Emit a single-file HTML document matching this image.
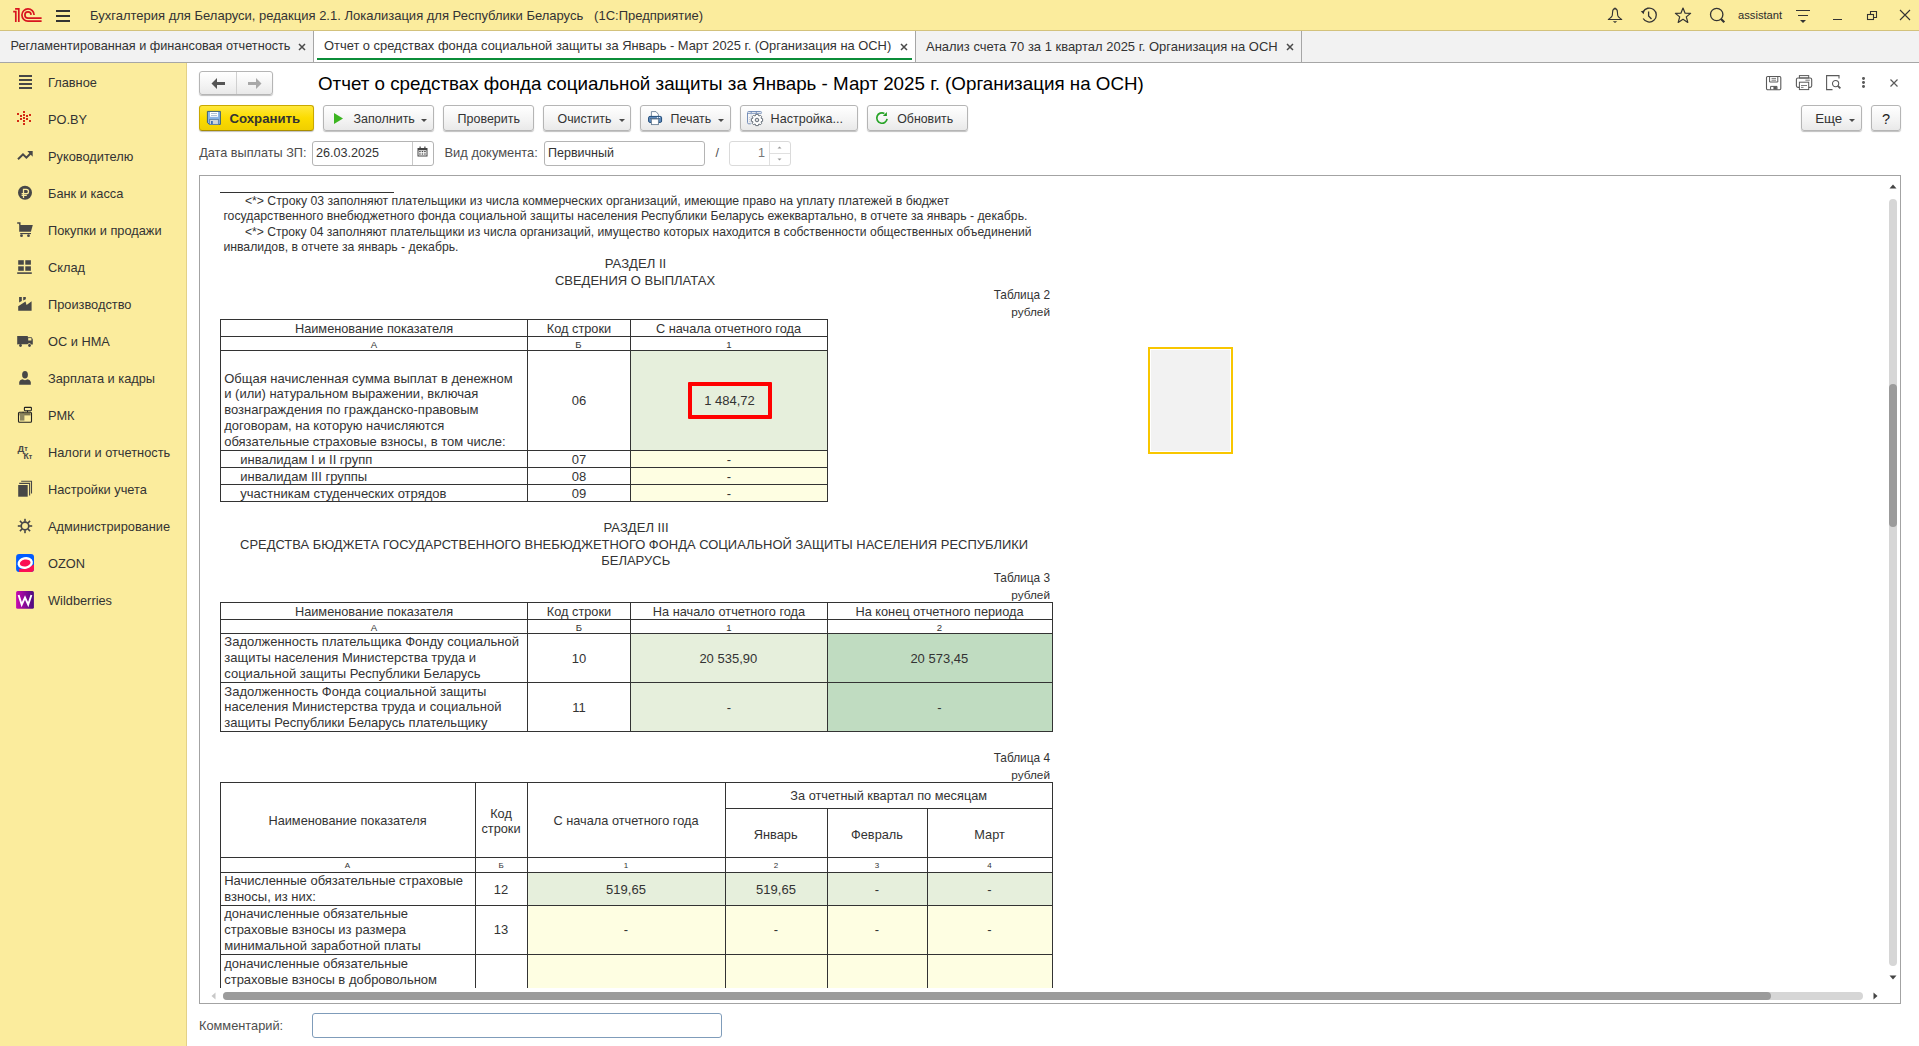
<!DOCTYPE html><html><head><meta charset="utf-8"><style>
html,body{margin:0;padding:0;width:1919px;height:1046px;overflow:hidden;background:#fff;}
body{position:relative;font-family:"Liberation Sans",sans-serif;}
.t{position:absolute;white-space:pre;line-height:1;}
.r{position:absolute;}
.btn{position:absolute;box-sizing:border-box;border:1px solid #b5b5b5;border-radius:3px;background:linear-gradient(#ffffff,#f3f3f3 60%,#e9e9e9);box-shadow:0 1px 1px rgba(0,0,0,0.25);}
svg{position:absolute;overflow:visible;}
</style></head><body>
<div class="r" style="left:0px;top:0px;width:1919px;height:30px;background:#fbec9d;"></div>
<div class="r" style="left:0px;top:30px;width:1919px;height:1px;background:#d3c27c;"></div>
<svg style="left:0px;top:0px" width="50" height="30" viewBox="0 0 50 30">
<g fill="none" stroke="#d8141f" stroke-width="1.7" stroke-linecap="butt">
<path d="M13.2 11.6 H15.8 V21.9"/>
<path d="M15.1 8.85 H18.8 V21.9"/>
<path d="M34.1 14.9 A6.1 6.1 0 1 0 28 21.1 H41.6"/>
<path d="M31.1 14.9 A3.1 3.1 0 1 0 28 18.1 H41.6"/>
</g></svg>
<div class="r" style="left:56px;top:10px;width:14px;height:1.5px;background:#333;"></div>
<div class="r" style="left:56px;top:15px;width:14px;height:1.5px;background:#333;"></div>
<div class="r" style="left:56px;top:20px;width:14px;height:1.5px;background:#333;"></div>
<div class="t" style="top:9px;font-size:13px;color:#333;left:90px;">Бухгалтерия для Беларуси, редакция 2.1. Локализация для Республики Беларусь   (1С:Предприятие)</div>
<svg style="left:1606px;top:7px" width="18" height="17" viewBox="0 0 18 17">
<path d="M9 1.6 C7.2 1.8 6.6 3.2 6.6 5 L6.3 8.4 C6 10.4 3.6 11.4 2.3 12.5 H15.7 C14.4 11.4 12 10.4 11.7 8.4 L11.4 5 C11.4 3.2 10.8 1.8 9 1.6 Z" fill="none" stroke="#333" stroke-width="1.1" stroke-linejoin="round"/>
<circle cx="9" cy="1.2" r="0.8" fill="#333"/>
<path d="M6.8 14.2 H11.2 L9 16 Z" fill="#333"/>
</svg>
<svg style="left:1640px;top:7px" width="18" height="17" viewBox="0 0 18 17">
<path d="M3.2 11.5 A7 7 0 1 0 3 5" fill="none" stroke="#333" stroke-width="1.3"/>
<path d="M0.8 4.2 L4.6 3.4 L3.6 7.2 Z" fill="#333"/>
<path d="M8.6 4.5 L8.6 9 L11.5 12" fill="none" stroke="#333" stroke-width="1.3"/>
</svg>
<svg style="left:1674px;top:7px" width="18" height="17" viewBox="0 0 18 17">
<path d="M9 1 L11.1 6.2 L16.6 6.4 L12.3 9.9 L13.8 15.4 L9 12.3 L4.2 15.4 L5.7 9.9 L1.4 6.4 L6.9 6.2 Z" fill="none" stroke="#333" stroke-width="1.2" stroke-linejoin="round"/>
</svg>
<svg style="left:1709px;top:7px" width="18" height="17" viewBox="0 0 18 17">
<circle cx="7.7" cy="7.5" r="6.2" fill="none" stroke="#333" stroke-width="1.3"/>
<path d="M12 12 L15.3 15.3" stroke="#333" stroke-width="2.2"/>
</svg>
<div class="t" style="top:10px;font-size:11.2px;color:#2a2a2a;left:1738px;">assistant</div>
<svg style="left:1795px;top:9px" width="16" height="15" viewBox="0 0 16 15">
<path d="M1 1.5 H15 M3 6.5 H13" stroke="#333" stroke-width="1"/>
<path d="M5 11 H11 L8 14 Z" fill="#333"/>
</svg>
<div class="r" style="left:1833px;top:18.5px;width:9px;height:1.5px;background:#333;"></div>
<svg style="left:1866px;top:10px" width="12" height="12" viewBox="0 0 12 12">
<rect x="1.5" y="4.5" width="6" height="5" fill="none" stroke="#333" stroke-width="1.1"/>
<path d="M4.5 4.5 V1.5 H10.5 V7.5 H7.5" fill="none" stroke="#333" stroke-width="1.1"/>
</svg>
<svg style="left:1899px;top:9px" width="12" height="12" viewBox="0 0 12 12">
<path d="M1 1 L11 11 M11 1 L1 11" stroke="#333" stroke-width="1.1"/>
</svg>
<div class="r" style="left:0px;top:31px;width:1919px;height:31px;background:#f2f2f2;"></div>
<div class="r" style="left:0px;top:62px;width:1919px;height:1px;background:#a6a6a6;"></div>
<div class="r" style="left:314px;top:31px;width:601px;height:31px;background:#ffffff;"></div>
<div class="r" style="left:313px;top:31px;width:1px;height:31px;background:#a6a6a6;"></div>
<div class="r" style="left:915px;top:31px;width:1px;height:31px;background:#a6a6a6;"></div>
<div class="r" style="left:1301px;top:31px;width:1px;height:31px;background:#a6a6a6;"></div>
<div class="r" style="left:317px;top:58px;width:595px;height:2px;background:#0b8d39;"></div>
<div class="t" style="top:40px;font-size:12.7px;color:#333;left:10.5px;">Регламентированная и финансовая отчетность</div>
<div class="t" style="top:40px;font-size:12.9px;color:#333;left:324px;">Отчет о средствах фонда социальной защиты за Январь - Март 2025 г. (Организация на ОСН)</div>
<div class="t" style="top:40px;font-size:12.98px;color:#333;left:926px;">Анализ счета 70 за 1 квартал 2025 г. Организация на ОСН</div>
<svg style="left:297.5px;top:42.5px" width="8" height="8" viewBox="0 0 8 8"><path d="M1 1 L7 7 M7 1 L1 7" stroke="#4a4a4a" stroke-width="1.5"/></svg>
<svg style="left:899.5px;top:42.5px" width="8" height="8" viewBox="0 0 8 8"><path d="M1 1 L7 7 M7 1 L1 7" stroke="#4a4a4a" stroke-width="1.5"/></svg>
<svg style="left:1285.5px;top:42.5px" width="8" height="8" viewBox="0 0 8 8"><path d="M1 1 L7 7 M7 1 L1 7" stroke="#4a4a4a" stroke-width="1.5"/></svg>
<div class="r" style="left:0px;top:63px;width:187px;height:983px;background:#fbec9d;"></div>
<div class="r" style="left:186px;top:63px;width:1px;height:983px;background:#e3d187;"></div>
<div class="t" style="top:77px;font-size:12.8px;color:#333;left:48px;">Главное</div>
<div class="t" style="top:114px;font-size:12.8px;color:#333;left:48px;">PO.BY</div>
<div class="t" style="top:151px;font-size:12.8px;color:#333;left:48px;">Руководителю</div>
<div class="t" style="top:188px;font-size:12.8px;color:#333;left:48px;">Банк и касса</div>
<div class="t" style="top:225px;font-size:12.8px;color:#333;left:48px;">Покупки и продажи</div>
<div class="t" style="top:262px;font-size:12.8px;color:#333;left:48px;">Склад</div>
<div class="t" style="top:299px;font-size:12.8px;color:#333;left:48px;">Производство</div>
<div class="t" style="top:336px;font-size:12.8px;color:#333;left:48px;">ОС и НМА</div>
<div class="t" style="top:373px;font-size:12.8px;color:#333;left:48px;">Зарплата и кадры</div>
<div class="t" style="top:410px;font-size:12.8px;color:#333;left:48px;">РМК</div>
<div class="t" style="top:447px;font-size:12.8px;color:#333;left:48px;">Налоги и отчетность</div>
<div class="t" style="top:484px;font-size:12.8px;color:#333;left:48px;">Настройки учета</div>
<div class="t" style="top:521px;font-size:12.8px;color:#333;left:48px;">Администрирование</div>
<div class="t" style="top:558px;font-size:12.8px;color:#333;left:48px;">OZON</div>
<div class="t" style="top:595px;font-size:12.8px;color:#333;left:48px;">Wildberries</div>
<svg style="left:14px;top:71px" width="22" height="22" viewBox="0 0 22 22"><rect x="5" y="4" width="13" height="2" fill="#474747"/><rect x="5" y="8" width="13" height="2" fill="#474747"/><rect x="5" y="12" width="13" height="2" fill="#474747"/><rect x="5" y="16" width="13" height="2" fill="#474747"/></svg>
<svg style="left:14px;top:108px" width="22" height="22" viewBox="0 0 22 22"><rect x="9" y="3" width="2" height="2" fill="#d42b14"/><rect x="9" y="6" width="2" height="2" fill="#d42b14"/><rect x="9" y="9" width="2" height="2" fill="#d42b14"/><rect x="9" y="12" width="2" height="2" fill="#d42b14"/><rect x="9" y="15" width="2" height="2" fill="#d42b14"/><rect x="3" y="5" width="2" height="2" fill="#d42b14"/><rect x="3" y="12" width="2" height="2" fill="#d42b14"/><rect x="15" y="6" width="2" height="2" fill="#d42b14"/><rect x="15" y="12" width="2" height="2" fill="#d42b14"/><rect x="6" y="7" width="2" height="2" fill="#d42b14"/><rect x="6" y="10" width="2" height="2" fill="#d42b14"/><rect x="12" y="7" width="2" height="2" fill="#d42b14"/><rect x="12" y="10" width="2" height="2" fill="#d42b14"/></svg>
<svg style="left:14px;top:145px" width="22" height="22" viewBox="0 0 22 22"><path d="M4 14.3 L9 9.3 L12.4 12.6 L16.5 8.5" fill="none" stroke="#474747" stroke-width="2"/><path d="M13.3 6.1 L18.7 6.1 L18.7 11.8 Z" fill="#474747"/></svg>
<svg style="left:14px;top:182px" width="22" height="22" viewBox="0 0 22 22"><circle cx="11" cy="10.8" r="7" fill="#474747"/><path d="M9.5 16 V7.3 H12.3 A2.2 2.2 0 0 1 12.3 11.7 H7.6 M7.6 13.4 H12.8" fill="none" stroke="#fbec9d" stroke-width="1.3"/></svg>
<svg style="left:14px;top:219px" width="22" height="22" viewBox="0 0 22 22"><path d="M3.2 4 H5.8 V6" fill="none" stroke="#474747" stroke-width="1.5"/><path d="M5.2 6 H18.8 L16.9 12.8 H5.2 Z" fill="#474747"/><rect x="6.2" y="14" width="10.8" height="1.1" fill="#474747"/><circle cx="7.5" cy="16.7" r="1.4" fill="#474747"/><circle cx="14.5" cy="16.7" r="1.4" fill="#474747"/></svg>
<svg style="left:14px;top:256px" width="22" height="22" viewBox="0 0 22 22"><rect x="4.2" y="4.2" width="5.6" height="4.5" fill="#474747"/><rect x="11.3" y="4.2" width="5.6" height="4.5" fill="#474747"/><rect x="4.2" y="10.3" width="5.6" height="4.5" fill="#474747"/><rect x="11.3" y="10.3" width="5.6" height="4.5" fill="#474747"/><rect x="3.2" y="16.3" width="14.6" height="1.6" fill="#474747"/></svg>
<svg style="left:14px;top:293px" width="22" height="22" viewBox="0 0 22 22"><path d="M5.1 4 H7.8 V8 L5.1 9.6 Z M9.2 4 H11.8 V6.2 L9.2 7.6 Z M4.2 13.2 L11.5 8.4 L12.6 12 L17.6 8.2 V17.8 H4.2 Z" fill="#474747"/></svg>
<svg style="left:14px;top:330px" width="22" height="22" viewBox="0 0 22 22"><path d="M3.2 6 H13.8 V7.2 H17.6 L18.8 9.2 V14.6 H17.2 A1.9 1.9 0 0 0 13.6 14.3 H9.6 A1.9 1.9 0 0 0 8.2 14.3 H4.8 A1.9 1.9 0 0 0 3.2 14.6 Z" fill="#474747"/><rect x="14.2" y="8.1" width="3.2" height="2.4" fill="#fbec9d"/><circle cx="6.5" cy="15.5" r="1.4" fill="#474747"/><circle cx="15.5" cy="15.5" r="1.4" fill="#474747"/></svg>
<svg style="left:14px;top:367px" width="22" height="22" viewBox="0 0 22 22"><ellipse cx="11" cy="7.8" rx="2.9" ry="3.8" fill="#474747"/><path d="M5.2 17.8 V15 Q5.6 12.9 8.3 12.3 L11 13.2 L13.7 12.3 Q16.4 12.9 16.8 15 V17.8 Z" fill="#474747"/></svg>
<svg style="left:14px;top:404px" width="22" height="22" viewBox="0 0 22 22"><rect x="8.6" y="7.8" width="1" height="1" fill="#222"/><rect x="4.5" y="8.3" width="13" height="10" rx="1" fill="none" stroke="#222" stroke-width="1.1"/><rect x="10.4" y="3.4" width="7" height="3.3" rx="0.6" fill="none" stroke="#222" stroke-width="1.1"/><rect x="13" y="6.6" width="1" height="1.6" fill="#222"/><rect x="5.4" y="9" width="11.2" height="2.4" fill="#7d7650"/><rect x="6" y="10" width="4.4" height="6.6" fill="#8c8660"/></svg>
<svg style="left:14px;top:441px" width="22" height="22" viewBox="0 0 22 22"><text x="3.6" y="10.8" font-family="Liberation Sans" font-weight="700" font-size="9.4" fill="#474747">Д</text><text x="10.2" y="10" font-family="Liberation Sans" font-weight="700" font-size="7" fill="#474747">т</text><text x="9.4" y="18" font-family="Liberation Sans" font-weight="700" font-size="8.6" fill="#474747">К</text><text x="14.8" y="18" font-family="Liberation Sans" font-weight="700" font-size="7" fill="#474747">т</text></svg>
<svg style="left:14px;top:478px" width="22" height="22" viewBox="0 0 22 22"><rect x="4.2" y="7" width="9.5" height="11.7" fill="#474747"/><path d="M5.2 5.4 H15.6 V17.6 M7.2 3.3 H17.5 V15.5" fill="none" stroke="#474747" stroke-width="1.1"/></svg>
<svg style="left:14px;top:515px" width="22" height="22" viewBox="0 0 22 22"><circle cx="11" cy="11" r="3.8" fill="none" stroke="#474747" stroke-width="1.7"/><rect x="10.2" y="3.8" width="1.6" height="3" fill="#474747" transform="rotate(0 11 11)"/><rect x="10.2" y="3.8" width="1.6" height="3" fill="#474747" transform="rotate(45 11 11)"/><rect x="10.2" y="3.8" width="1.6" height="3" fill="#474747" transform="rotate(90 11 11)"/><rect x="10.2" y="3.8" width="1.6" height="3" fill="#474747" transform="rotate(135 11 11)"/><rect x="10.2" y="3.8" width="1.6" height="3" fill="#474747" transform="rotate(180 11 11)"/><rect x="10.2" y="3.8" width="1.6" height="3" fill="#474747" transform="rotate(225 11 11)"/><rect x="10.2" y="3.8" width="1.6" height="3" fill="#474747" transform="rotate(270 11 11)"/><rect x="10.2" y="3.8" width="1.6" height="3" fill="#474747" transform="rotate(315 11 11)"/></svg>
<svg style="left:14px;top:552px" width="22" height="22" viewBox="0 0 22 22"><defs><clipPath id="oz"><rect x="2.1" y="2" width="17.9" height="17.9" rx="3"/></clipPath></defs><g clip-path="url(#oz)"><rect x="0" y="0" width="22" height="22" fill="#005bff"/><path d="M5 17 Q12 17 20 12.5 V22 H5 Z" fill="#fb0f54"/><ellipse cx="11.2" cy="11" rx="6.6" ry="4.7" transform="rotate(-12 11.2 11)" fill="#fb0f54" stroke="#fff" stroke-width="2.4"/></g></svg>
<svg style="left:14px;top:589px" width="22" height="22" viewBox="0 0 22 22"><defs><linearGradient id="wb" x1="0" x2="1"><stop offset="0" stop-color="#c80ab0"/><stop offset="1" stop-color="#4a0b7e"/></linearGradient></defs><rect x="2.1" y="2.1" width="17.8" height="17.6" rx="1.5" fill="url(#wb)"/><path d="M4.6 6 L7.7 15.6 L11 8.6 L14.2 15.6 L17.4 6" fill="none" stroke="#fff" stroke-width="1.9" stroke-linejoin="miter"/></svg>
<div class="btn" style="left:199px;top:71px;width:74px;height:24px;"></div>
<div class="r" style="left:236px;top:72px;width:1px;height:22px;background:#d0d0d0;"></div>
<svg style="left:211px;top:77px" width="15" height="13" viewBox="0 0 15 13"><path d="M0.5 6.5 L6 1 V4.9 H14 V8.1 H6 V12 Z" fill="#555"/></svg>
<svg style="left:247px;top:77px" width="15" height="13" viewBox="0 0 15 13"><path d="M14.5 6.5 L9 1 V4.9 H1 V8.1 H9 V12 Z" fill="#a8a8a8"/></svg>
<div class="t" style="top:75px;font-size:18.78px;color:#000;left:318px;">Отчет о средствах фонда социальной защиты за Январь - Март 2025 г. (Организация на ОСН)</div>
<div class="btn" style="left:199px;top:105px;width:115px;height:26px;background:linear-gradient(#ffe83c,#fcdc00 50%,#f0cf00);border-color:#c9a800 #c9a800 #a88d00;"></div>
<svg style="left:204px;top:108px" width="22" height="20" viewBox="0 0 22 20">
<path d="M3.4 3.4 H16.4 V16.4 H5.4 L3.4 14.6 Z" fill="#8ab4e6" stroke="#2f5576" stroke-width="0.9"/>
<rect x="6" y="4" width="8" height="4.8" fill="#fff"/>
<rect x="7" y="5.2" width="6" height="0.8" fill="#9db3cc"/><rect x="7" y="7" width="6" height="0.8" fill="#9db3cc"/>
<rect x="5.6" y="11.4" width="8.8" height="5" fill="#cfd6da" stroke="#5b7fa8" stroke-width="0.9"/>
<rect x="7" y="13" width="1.8" height="3" fill="#3f72b5"/>
</svg>
<div class="t" style="top:112px;font-size:13.2px;color:#333;font-weight:700;left:229.5px;">Сохранить</div>
<div class="btn" style="left:323px;top:105px;width:111px;height:26px;"></div>
<svg style="left:334px;top:113px" width="9" height="11" viewBox="0 0 9 11"><path d="M0 0 L9 5.5 L0 11 Z" fill="#3cb521"/></svg>
<div class="t" style="top:113px;font-size:12.5px;color:#333;left:353.5px;">Заполнить</div>
<svg style="left:421.0px;top:118.5px" width="6" height="3" viewBox="0 0 6 3"><path d="M0 0 H6 L3 3 Z" fill="#4a4a4a"/></svg>
<div class="btn" style="left:443px;top:105px;width:91px;height:26px;"></div>
<div class="t" style="top:113px;font-size:12.5px;color:#333;left:457.5px;">Проверить</div>
<div class="btn" style="left:543px;top:105px;width:88px;height:26px;"></div>
<div class="t" style="top:113px;font-size:12.4px;color:#333;left:557.5px;">Очистить</div>
<svg style="left:618.5px;top:118.5px" width="6" height="3" viewBox="0 0 6 3"><path d="M0 0 H6 L3 3 Z" fill="#4a4a4a"/></svg>
<div class="btn" style="left:640px;top:105px;width:91px;height:26px;"></div>
<svg style="left:645px;top:108px" width="22" height="20" viewBox="0 0 22 20">
<path d="M6.4 8.3 V3.6 H11 L13.4 6.3 V8.3" fill="#fff" stroke="#6a7f96" stroke-width="0.9"/>
<rect x="3.6" y="8.4" width="13" height="6" rx="1.3" fill="#5f8bbd" stroke="#1f4a78" stroke-width="1"/>
<rect x="5.2" y="10.2" width="9.8" height="0.8" fill="#3b5877"/>
<rect x="6.4" y="11" width="7" height="5.6" fill="#fff" stroke="#6a7f96" stroke-width="0.9"/>
<circle cx="12.5" cy="9.6" r="0.6" fill="#fff"/><circle cx="14.5" cy="9.6" r="0.6" fill="#fff"/>
</svg>
<div class="t" style="top:113px;font-size:12.4px;color:#333;left:670.6px;">Печать</div>
<svg style="left:718.0px;top:118.5px" width="6" height="3" viewBox="0 0 6 3"><path d="M0 0 H6 L3 3 Z" fill="#4a4a4a"/></svg>
<div class="btn" style="left:740px;top:105px;width:118px;height:26px;"></div>
<svg style="left:744px;top:108px" width="22" height="20" viewBox="0 0 22 20">
<path d="M3.5 5 V14.6 Q3.5 15.8 4.7 15.8 H6.8 M3.5 4.6 Q3.5 3.5 4.7 3.5 H16.4 Q17.6 3.5 17.6 4.6" fill="none" stroke="#6a86b4" stroke-width="0.9"/>
<path d="M3.6 5.3 H17.6 M7.2 3.5 V5.3 M12.3 3.5 V5.3" stroke="#6a86b4" stroke-width="0.9"/>
<path d="M7.1 5.4 V16" stroke="#b9c6dc" stroke-width="0.6"/>
<circle cx="5.5" cy="9.4" r="0.35" fill="#8a8fb5"/><circle cx="5.5" cy="11.4" r="0.35" fill="#8a8fb5"/><circle cx="5.5" cy="13.3" r="0.35" fill="#8a8fb5"/>
<g transform="translate(13,12)"><path d="M-1.3 -5.6 H1.3 L1.8 -4 L3.6 -4.6 L4.6 -3.6 L4 -1.8 L5.6 -1.3 V1.3 L4 1.8 L4.6 3.6 L3.6 4.6 L1.8 4 L1.3 5.6 H-1.3 L-1.8 4 L-3.6 4.6 L-4.6 3.6 L-4 1.8 L-5.6 1.3 V-1.3 L-4 -1.8 L-4.6 -3.6 L-3.6 -4.6 L-1.8 -4 Z" fill="#fff" stroke="#59636e" stroke-width="0.9" stroke-linejoin="round"/>
<circle r="1.8" fill="#ddd" stroke="#59636e" stroke-width="0.9"/></g>
</svg>
<div class="t" style="top:113px;font-size:12.6px;color:#333;left:770.6px;">Настройка...</div>
<div class="btn" style="left:867px;top:105px;width:101px;height:26px;"></div>
<svg style="left:871px;top:108px" width="22" height="20" viewBox="0 0 22 20">
<path d="M16.12 10.9 A5.2 5.2 0 1 1 13.4 5.4" fill="none" stroke="#28a428" stroke-width="1.7"/>
<path d="M11.9 7.9 L15.9 3.9 L15.9 7.9 Z" fill="#1f9a1f"/>
</svg>
<div class="t" style="top:113px;font-size:12.35px;color:#333;left:897.25px;">Обновить</div>
<div class="btn" style="left:1801px;top:105px;width:61px;height:26px;"></div>
<div class="t" style="top:112px;font-size:13.3px;color:#333;left:1815.2px;">Еще</div>
<svg style="left:1849.0px;top:118.5px" width="6" height="3" viewBox="0 0 6 3"><path d="M0 0 H6 L3 3 Z" fill="#4a4a4a"/></svg>
<div class="btn" style="left:1871px;top:105px;width:30px;height:26px;"></div>
<div class="t" style="top:112px;font-size:14.5px;color:#222;left:1876.00px;width:20px;text-align:center;">?</div>
<svg style="left:1765px;top:75px" width="17" height="16" viewBox="0 0 17 16">
<rect x="1.5" y="1.5" width="14.3" height="13.2" rx="1.2" fill="none" stroke="#5a5a5a" stroke-width="1.1"/>
<path d="M4.6 1.5 V7 H12.8 V1.5" fill="none" stroke="#5a5a5a" stroke-width="1"/>
<path d="M6.5 3.4 H11 M6.5 5.2 H11" stroke="#5a5a5a" stroke-width="0.8"/>
<path d="M5.6 14.7 V11.4 H12 V14.7" fill="none" stroke="#5a5a5a" stroke-width="1"/>
<rect x="8.4" y="11.6" width="3.4" height="3" fill="#5a5a5a"/>
</svg>
<svg style="left:1795px;top:75px" width="18" height="16" viewBox="0 0 18 16">
<rect x="4.4" y="0.6" width="9.3" height="2.4" fill="none" stroke="#5a5a5a" stroke-width="1"/>
<rect x="1.4" y="3" width="15.3" height="9.4" rx="1.6" fill="none" stroke="#5a5a5a" stroke-width="1.1"/>
<rect x="4.4" y="7.2" width="9.3" height="7.4" fill="#fff" stroke="#5a5a5a" stroke-width="1"/>
<path d="M6 10.5 H12 M6 12.4 H8.5 M10.4 5.2 H14.8" stroke="#5a5a5a" stroke-width="0.8"/>
</svg>
<svg style="left:1825px;top:75px" width="17" height="16" viewBox="0 0 17 16">
<path d="M7.5 14.6 H1.6 V0.6 H14 V3.6" fill="none" stroke="#5a5a5a" stroke-width="1.1"/>
<circle cx="10.6" cy="8.6" r="3.1" fill="none" stroke="#5a5a5a" stroke-width="1.1"/>
<path d="M12.8 10.8 L15.4 13.4" stroke="#5a5a5a" stroke-width="1.8"/>
</svg>
<div class="r" style="left:1862.1px;top:76.89999999999999px;width:2.8px;height:2.8px;border-radius:50%;background:#5a5a5a"></div>
<div class="r" style="left:1862.1px;top:81.1px;width:2.8px;height:2.8px;border-radius:50%;background:#5a5a5a"></div>
<div class="r" style="left:1862.1px;top:85.19999999999999px;width:2.8px;height:2.8px;border-radius:50%;background:#5a5a5a"></div>
<svg style="left:1889.5px;top:78.5px" width="8" height="8" viewBox="0 0 8 8"><path d="M0.5 0.5 L7.5 7.5 M7.5 0.5 L0.5 7.5" stroke="#5a5a5a" stroke-width="1.2"/></svg>
<div class="t" style="top:147px;font-size:12.69px;color:#4d4d4d;left:199.2px;">Дата выплаты ЗП:</div>
<div class="r" style="left:312px;top:141px;width:122px;height:25px;box-sizing:border-box;border:1px solid #b4b4b4;border-radius:3px;background:#fff"></div>
<div class="r" style="left:412px;top:142px;width:1px;height:23px;background:#c8c8c8;"></div>
<div class="t" style="top:147px;font-size:12.6px;color:#333;left:316px;">26.03.2025</div>
<svg style="left:417px;top:146px" width="11" height="11" viewBox="0 0 11 11">
<rect x="0.5" y="2" width="10" height="8.5" fill="#444"/><rect x="1.5" y="4.3" width="8" height="5.2" fill="#fff"/>
<rect x="2.5" y="0.5" width="1.2" height="2.5" fill="#444"/><rect x="7.3" y="0.5" width="1.2" height="2.5" fill="#444"/>
<g fill="#444"><rect x="2.2" y="5" width="1.5" height="1.2"/><rect x="4.7" y="5" width="1.5" height="1.2"/><rect x="7.2" y="5" width="1.5" height="1.2"/><rect x="2.2" y="7.4" width="1.5" height="1.2"/><rect x="4.7" y="7.4" width="1.5" height="1.2"/><rect x="7.2" y="7.4" width="1.5" height="1.2"/></g>
</svg>
<div class="t" style="top:147px;font-size:12.9px;color:#4d4d4d;left:444.5px;">Вид документа:</div>
<div class="r" style="left:544px;top:141px;width:161px;height:25px;box-sizing:border-box;border:1px solid #b4b4b4;border-radius:3px;background:#fff"></div>
<div class="t" style="top:147px;font-size:12.52px;color:#333;left:548px;">Первичный</div>
<div class="t" style="top:147px;font-size:12.6px;color:#4d4d4d;left:715.5px;">/</div>
<div class="r" style="left:729px;top:141px;width:62px;height:25px;box-sizing:border-box;border:1px solid #dadada;border-radius:3px;background:#fff"></div>
<div class="r" style="left:769px;top:142px;width:1px;height:23px;background:#e0e0e0;"></div>
<div class="r" style="left:770px;top:153px;width:20px;height:1px;background:#e0e0e0;"></div>
<div class="t" style="top:147px;font-size:12.6px;color:#777;left:735.00px;width:30px;text-align:right;">1</div>
<svg style="left:776px;top:145px" width="7" height="17" viewBox="0 0 7 17"><path d="M1.5 3.5 L3.5 1.5 L5.5 3.5 Z M1.5 13.5 L3.5 15.5 L5.5 13.5 Z" fill="#999"/></svg>
<div class="r" style="left:199px;top:175px;width:1702px;height:829px;box-sizing:border-box;border:1px solid #a3a3a3;background:#fff"></div>
<div class="r" style="left:200px;top:176px;width:1685px;height:812px;overflow:hidden">
<div style="position:absolute;left:-200px;top:-176px;width:1919px;height:1046px"><div class="r" style="left:220px;top:192px;width:174px;height:1px;background:#333;"></div><div class="t" style="top:195px;font-size:12.25px;color:#333;left:244.9px;">&lt;*&gt; Строку 03 заполняют плательщики из числа коммерческих организаций, имеющие право на уплату платежей в бюджет</div><div class="t" style="top:210px;font-size:12.25px;color:#333;left:223.4px;">государственного внебюджетного фонда социальной защиты населения Республики Беларусь ежеквартально, в отчете за январь - декабрь.</div><div class="t" style="top:226px;font-size:12.15px;color:#333;left:244.9px;">&lt;*&gt; Строку 04 заполняют плательщики из числа организаций, имущество которых находится в собственности общественных объединений</div><div class="t" style="top:241px;font-size:12.25px;color:#333;left:223.4px;">инвалидов, в отчете за январь - декабрь.</div><div class="t" style="top:257px;font-size:13.1px;color:#333;left:435.50px;width:400px;text-align:center;">РАЗДЕЛ II</div><div class="t" style="top:274px;font-size:13px;color:#333;left:435.00px;width:400px;text-align:center;">СВЕДЕНИЯ О ВЫПЛАТАХ</div><div class="t" style="top:290px;font-size:11.85px;color:#333;left:850.00px;width:200px;text-align:right;">Таблица 2</div><div class="t" style="top:307px;font-size:11.8px;color:#333;left:850.00px;width:200px;text-align:right;">рублей</div><div class="r" style="left:631px;top:351px;width:196px;height:99px;background:#e6efdc;"></div><div class="r" style="left:631px;top:451px;width:196px;height:50px;background:#fefee2;"></div><div class="r" style="left:220px;top:319px;width:608px;height:1px;background:#333;"></div><div class="r" style="left:220px;top:336px;width:608px;height:1px;background:#333;"></div><div class="r" style="left:220px;top:350px;width:608px;height:1px;background:#333;"></div><div class="r" style="left:220px;top:450px;width:608px;height:1px;background:#333;"></div><div class="r" style="left:220px;top:467px;width:608px;height:1px;background:#333;"></div><div class="r" style="left:220px;top:484px;width:608px;height:1px;background:#333;"></div><div class="r" style="left:220px;top:501px;width:608px;height:1px;background:#333;"></div><div class="r" style="left:220px;top:319px;width:1px;height:183px;background:#333;"></div><div class="r" style="left:527px;top:319px;width:1px;height:183px;background:#333;"></div><div class="r" style="left:630px;top:319px;width:1px;height:183px;background:#333;"></div><div class="r" style="left:827px;top:319px;width:1px;height:183px;background:#333;"></div><div class="t" style="top:323px;font-size:12.75px;color:#333;left:224.00px;width:300px;text-align:center;">Наименование показателя</div><div class="t" style="top:323px;font-size:12.75px;color:#333;left:529.00px;width:100px;text-align:center;">Код строки</div><div class="t" style="top:323px;font-size:12.75px;color:#333;left:628.50px;width:200px;text-align:center;">С начала отчетного года</div><div class="t" style="top:340px;font-size:9.6px;color:#333;left:324.00px;width:100px;text-align:center;">А</div><div class="t" style="top:340px;font-size:9.6px;color:#333;left:528.50px;width:100px;text-align:center;">Б</div><div class="t" style="top:340px;font-size:9.6px;color:#333;left:679.00px;width:100px;text-align:center;">1</div><div class="t" style="top:372px;font-size:13px;color:#333;left:224.2px;">Общая начисленная сумма выплат в денежном</div><div class="t" style="top:387px;font-size:13px;color:#333;left:224.2px;">и (или) натуральном выражении, включая</div><div class="t" style="top:403px;font-size:13px;color:#333;left:224.2px;">вознаграждения по гражданско-правовым</div><div class="t" style="top:419px;font-size:13px;color:#333;left:224.2px;">договорам, на которую начисляются</div><div class="t" style="top:435px;font-size:13px;color:#333;left:224.2px;">обязательные страховые взносы, в том числе:</div><div class="t" style="top:394px;font-size:13px;color:#333;left:549.00px;width:60px;text-align:center;">06</div><div class="r" style="left:688px;top:382px;width:84px;height:37px;box-sizing:border-box;border:4px solid #ff0000;border-radius:1px"></div><div class="t" style="top:394px;font-size:13px;color:#333;left:689.50px;width:80px;text-align:center;">1 484,72</div><div class="t" style="top:453px;font-size:13px;color:#333;left:240.3px;">инвалидам I и II групп</div><div class="t" style="top:453px;font-size:13px;color:#333;left:549.00px;width:60px;text-align:center;">07</div><div class="t" style="top:453px;font-size:13px;color:#333;left:699.00px;width:60px;text-align:center;">-</div><div class="t" style="top:470px;font-size:13px;color:#333;left:240.3px;">инвалидам III группы</div><div class="t" style="top:470px;font-size:13px;color:#333;left:549.00px;width:60px;text-align:center;">08</div><div class="t" style="top:470px;font-size:13px;color:#333;left:699.00px;width:60px;text-align:center;">-</div><div class="t" style="top:487px;font-size:13px;color:#333;left:240.3px;">участникам студенческих отрядов</div><div class="t" style="top:487px;font-size:13px;color:#333;left:549.00px;width:60px;text-align:center;">09</div><div class="t" style="top:487px;font-size:13px;color:#333;left:699.00px;width:60px;text-align:center;">-</div><div class="t" style="top:521px;font-size:13.1px;color:#333;left:436.00px;width:400px;text-align:center;">РАЗДЕЛ III</div><div class="t" style="top:539px;font-size:12.96px;color:#333;left:184.10px;width:900px;text-align:center;">СРЕДСТВА БЮДЖЕТА ГОСУДАРСТВЕННОГО ВНЕБЮДЖЕТНОГО ФОНДА СОЦИАЛЬНОЙ ЗАЩИТЫ НАСЕЛЕНИЯ РЕСПУБЛИКИ</div><div class="t" style="top:554px;font-size:13px;color:#333;left:485.70px;width:300px;text-align:center;">БЕЛАРУСЬ</div><div class="t" style="top:573px;font-size:11.85px;color:#333;left:850.00px;width:200px;text-align:right;">Таблица 3</div><div class="t" style="top:590px;font-size:11.8px;color:#333;left:850.00px;width:200px;text-align:right;">рублей</div><div class="r" style="left:631px;top:634px;width:196px;height:97px;background:#e6efdc;"></div><div class="r" style="left:828px;top:634px;width:224px;height:97px;background:#c0dcc1;"></div><div class="r" style="left:220px;top:602px;width:833px;height:1px;background:#333;"></div><div class="r" style="left:220px;top:619px;width:833px;height:1px;background:#333;"></div><div class="r" style="left:220px;top:633px;width:833px;height:1px;background:#333;"></div><div class="r" style="left:220px;top:682px;width:833px;height:1px;background:#333;"></div><div class="r" style="left:220px;top:731px;width:833px;height:1px;background:#333;"></div><div class="r" style="left:220px;top:602px;width:1px;height:130px;background:#333;"></div><div class="r" style="left:527px;top:602px;width:1px;height:130px;background:#333;"></div><div class="r" style="left:630px;top:602px;width:1px;height:130px;background:#333;"></div><div class="r" style="left:827px;top:602px;width:1px;height:130px;background:#333;"></div><div class="r" style="left:1052px;top:602px;width:1px;height:130px;background:#333;"></div><div class="t" style="top:606px;font-size:12.75px;color:#333;left:224.00px;width:300px;text-align:center;">Наименование показателя</div><div class="t" style="top:606px;font-size:12.75px;color:#333;left:529.00px;width:100px;text-align:center;">Код строки</div><div class="t" style="top:606px;font-size:12.75px;color:#333;left:629.00px;width:200px;text-align:center;">На начало отчетного года</div><div class="t" style="top:606px;font-size:12.75px;color:#333;left:829.50px;width:220px;text-align:center;">На конец отчетного периода</div><div class="t" style="top:623px;font-size:9.6px;color:#333;left:324.00px;width:100px;text-align:center;">А</div><div class="t" style="top:623px;font-size:9.6px;color:#333;left:529.00px;width:100px;text-align:center;">Б</div><div class="t" style="top:623px;font-size:9.6px;color:#333;left:679.00px;width:100px;text-align:center;">1</div><div class="t" style="top:623px;font-size:9.6px;color:#333;left:889.50px;width:100px;text-align:center;">2</div><div class="t" style="top:635px;font-size:13px;color:#333;left:224.3px;">Задолженность плательщика Фонду социальной</div><div class="t" style="top:651px;font-size:13px;color:#333;left:224.3px;">защиты населения Министерства труда и</div><div class="t" style="top:667px;font-size:13px;color:#333;left:224.3px;">социальной защиты Республики Беларусь</div><div class="t" style="top:652px;font-size:13px;color:#333;left:549.00px;width:60px;text-align:center;">10</div><div class="t" style="top:652px;font-size:13px;color:#333;left:678.30px;width:100px;text-align:center;">20 535,90</div><div class="t" style="top:652px;font-size:13px;color:#333;left:889.30px;width:100px;text-align:center;">20 573,45</div><div class="t" style="top:685px;font-size:13px;color:#333;left:224.3px;">Задолженность Фонда социальной защиты</div><div class="t" style="top:700px;font-size:13px;color:#333;left:224.3px;">населения Министерства труда и социальной</div><div class="t" style="top:716px;font-size:13px;color:#333;left:224.3px;">защиты Республики Беларусь плательщику</div><div class="t" style="top:701px;font-size:13px;color:#333;left:549.00px;width:60px;text-align:center;">11</div><div class="t" style="top:701px;font-size:13px;color:#333;left:699.00px;width:60px;text-align:center;">-</div><div class="t" style="top:701px;font-size:13px;color:#333;left:909.50px;width:60px;text-align:center;">-</div><div class="t" style="top:753px;font-size:11.85px;color:#333;left:850.00px;width:200px;text-align:right;">Таблица 4</div><div class="t" style="top:770px;font-size:11.8px;color:#333;left:850.00px;width:200px;text-align:right;">рублей</div><div class="r" style="left:528px;top:873px;width:524px;height:32px;background:#e6efdc;"></div><div class="r" style="left:528px;top:906px;width:524px;height:90px;background:#fefee2;"></div><div class="r" style="left:220px;top:782px;width:833px;height:1px;background:#333;"></div><div class="r" style="left:220px;top:857px;width:833px;height:1px;background:#333;"></div><div class="r" style="left:220px;top:872px;width:833px;height:1px;background:#333;"></div><div class="r" style="left:220px;top:905px;width:833px;height:1px;background:#333;"></div><div class="r" style="left:220px;top:954px;width:833px;height:1px;background:#333;"></div><div class="r" style="left:725px;top:808px;width:328px;height:1px;background:#333;"></div><div class="r" style="left:220px;top:782px;width:1px;height:219px;background:#333;"></div><div class="r" style="left:475px;top:782px;width:1px;height:219px;background:#333;"></div><div class="r" style="left:527px;top:782px;width:1px;height:219px;background:#333;"></div><div class="r" style="left:725px;top:782px;width:1px;height:219px;background:#333;"></div><div class="r" style="left:1052px;top:782px;width:1px;height:219px;background:#333;"></div><div class="r" style="left:827px;top:808px;width:1px;height:193px;background:#333;"></div><div class="r" style="left:927px;top:808px;width:1px;height:193px;background:#333;"></div><div class="t" style="top:815px;font-size:12.75px;color:#333;left:222.50px;width:250px;text-align:center;">Наименование показателя</div><div class="t" style="top:808px;font-size:12.75px;color:#333;left:476.00px;width:50px;text-align:center;">Код</div><div class="t" style="top:823px;font-size:12.75px;color:#333;left:476.00px;width:50px;text-align:center;">строки</div><div class="t" style="top:815px;font-size:12.75px;color:#333;left:531.00px;width:190px;text-align:center;">С начала отчетного года</div><div class="t" style="top:790px;font-size:12.75px;color:#333;left:728.70px;width:320px;text-align:center;">За отчетный квартал по месяцам</div><div class="t" style="top:829px;font-size:12.75px;color:#333;left:725.70px;width:100px;text-align:center;">Январь</div><div class="t" style="top:829px;font-size:12.75px;color:#333;left:827.00px;width:100px;text-align:center;">Февраль</div><div class="t" style="top:829px;font-size:12.75px;color:#333;left:929.60px;width:120px;text-align:center;">Март</div><div class="t" style="top:862px;font-size:8px;color:#333;left:317.50px;width:60px;text-align:center;">А</div><div class="t" style="top:862px;font-size:8px;color:#333;left:471.00px;width:60px;text-align:center;">Б</div><div class="t" style="top:862px;font-size:8px;color:#333;left:596.00px;width:60px;text-align:center;">1</div><div class="t" style="top:862px;font-size:8px;color:#333;left:746.00px;width:60px;text-align:center;">2</div><div class="t" style="top:862px;font-size:8px;color:#333;left:847.00px;width:60px;text-align:center;">3</div><div class="t" style="top:862px;font-size:8px;color:#333;left:959.50px;width:60px;text-align:center;">4</div><div class="t" style="top:874px;font-size:13px;color:#333;left:224.2px;">Начисленные обязательные страховые</div><div class="t" style="top:890px;font-size:13px;color:#333;left:224.2px;">взносы, из них:</div><div class="t" style="top:883px;font-size:13px;color:#333;left:476.00px;width:50px;text-align:center;">12</div><div class="t" style="top:883px;font-size:13px;color:#333;left:576.00px;width:100px;text-align:center;">519,65</div><div class="t" style="top:883px;font-size:13px;color:#333;left:726.00px;width:100px;text-align:center;">519,65</div><div class="t" style="top:883px;font-size:13px;color:#333;left:847.00px;width:60px;text-align:center;">-</div><div class="t" style="top:883px;font-size:13px;color:#333;left:959.50px;width:60px;text-align:center;">-</div><div class="t" style="top:907px;font-size:13px;color:#333;left:224.2px;">доначисленные обязательные</div><div class="t" style="top:923px;font-size:13px;color:#333;left:224.2px;">страховые взносы из размера</div><div class="t" style="top:939px;font-size:13px;color:#333;left:224.2px;">минимальной заработной платы</div><div class="t" style="top:923px;font-size:13px;color:#333;left:476.00px;width:50px;text-align:center;">13</div><div class="t" style="top:923px;font-size:13px;color:#333;left:596.00px;width:60px;text-align:center;">-</div><div class="t" style="top:923px;font-size:13px;color:#333;left:746.00px;width:60px;text-align:center;">-</div><div class="t" style="top:923px;font-size:13px;color:#333;left:847.00px;width:60px;text-align:center;">-</div><div class="t" style="top:923px;font-size:13px;color:#333;left:959.50px;width:60px;text-align:center;">-</div><div class="t" style="top:957px;font-size:13px;color:#333;left:224.2px;">доначисленные обязательные</div><div class="t" style="top:973px;font-size:13px;color:#333;left:224.2px;">страховые взносы в добровольном</div><div class="t" style="top:989px;font-size:13px;color:#333;left:224.2px;">порядке</div><div class="r" style="left:1148px;top:347px;width:85px;height:107px;box-sizing:border-box;border:2px solid #f8c600;background:#f2f2f2;box-shadow:inset 0 0 0 1px #fff"></div></div>
</div>
<div class="r" style="left:1889px;top:199px;width:8px;height:767px;border-radius:4px;background:#d6d6d6"></div>
<div class="r" style="left:1889px;top:384px;width:8px;height:143px;border-radius:4px;background:#9b9b9b"></div>
<svg style="left:1889px;top:184px" width="8" height="5" viewBox="0 0 8 5"><path d="M0.5 4.5 L4 0.5 L7.5 4.5 Z" fill="#444"/></svg>
<svg style="left:1889px;top:975px" width="8" height="5" viewBox="0 0 8 5"><path d="M0.5 0.5 L4 4.5 L7.5 0.5 Z" fill="#444"/></svg>
<div class="r" style="left:223px;top:992px;width:1640px;height:8px;border-radius:4px;background:#d6d6d6"></div>
<div class="r" style="left:223px;top:992px;width:1548px;height:8px;border-radius:4px;background:#9b9b9b"></div>
<svg style="left:211px;top:992px" width="5" height="8" viewBox="0 0 5 8"><path d="M4.5 0.5 L0.5 4 L4.5 7.5 Z" fill="#c8c8c8"/></svg>
<svg style="left:1873px;top:992px" width="5" height="8" viewBox="0 0 5 8"><path d="M0.5 0.5 L4.5 4 L0.5 7.5 Z" fill="#444"/></svg>
<div class="t" style="top:1020px;font-size:12.8px;color:#4d4d4d;left:199px;">Комментарий:</div>
<div class="r" style="left:312px;top:1013px;width:410px;height:25px;box-sizing:border-box;border:1px solid #7f9cba;border-radius:3px;background:#fff"></div>
</body></html>
